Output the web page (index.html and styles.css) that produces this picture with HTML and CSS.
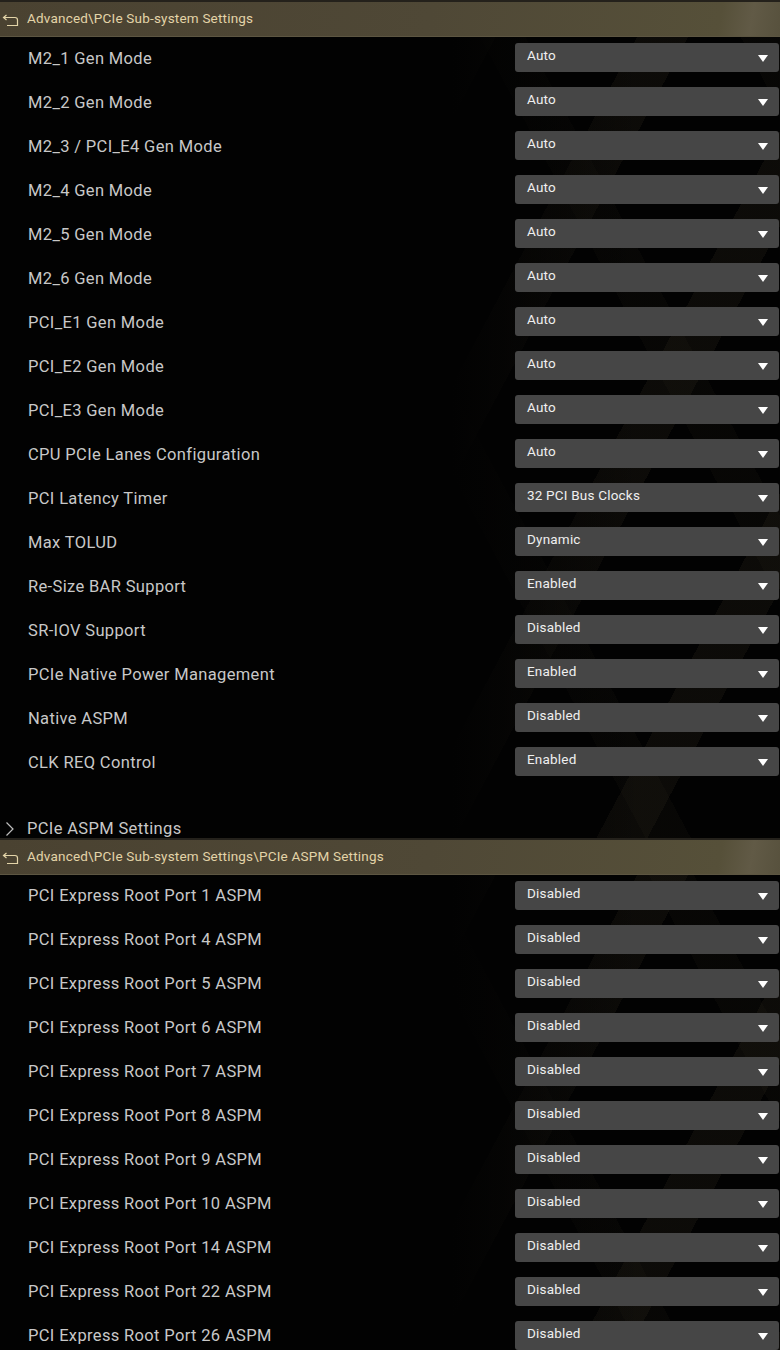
FILE: index.html
```html
<!DOCTYPE html>
<html lang="en">
<head>
<meta charset="utf-8">
<title>PCIe Sub-system Settings</title>
<link rel="stylesheet" href="styles.css">
</head>
<body>
<section class="page page-main">
  <header class="crumb">
    <svg class="back" width="17" height="13" viewBox="0 0 17 13"><path d="M4.5 1 L1.5 3.5 L4.5 6 M1.8 3.5 H13 Q15.5 3.5 15.5 6 V11.5 H5" fill="none" stroke="#e3d4a8" stroke-width="1.2"/></svg>
    <span>Advanced\PCIe Sub-system Settings</span>
  </header>
  <div class="list">
    <div class="row"><span class="label">M2_1 Gen Mode</span><div class="select"><span>Auto</span><i class="caret"></i></div></div>
    <div class="row"><span class="label">M2_2 Gen Mode</span><div class="select"><span>Auto</span><i class="caret"></i></div></div>
    <div class="row"><span class="label">M2_3 / PCI_E4 Gen Mode</span><div class="select"><span>Auto</span><i class="caret"></i></div></div>
    <div class="row"><span class="label">M2_4 Gen Mode</span><div class="select"><span>Auto</span><i class="caret"></i></div></div>
    <div class="row"><span class="label">M2_5 Gen Mode</span><div class="select"><span>Auto</span><i class="caret"></i></div></div>
    <div class="row"><span class="label">M2_6 Gen Mode</span><div class="select"><span>Auto</span><i class="caret"></i></div></div>
    <div class="row"><span class="label">PCI_E1 Gen Mode</span><div class="select"><span>Auto</span><i class="caret"></i></div></div>
    <div class="row"><span class="label">PCI_E2 Gen Mode</span><div class="select"><span>Auto</span><i class="caret"></i></div></div>
    <div class="row"><span class="label">PCI_E3 Gen Mode</span><div class="select"><span>Auto</span><i class="caret"></i></div></div>
    <div class="row"><span class="label">CPU PCIe Lanes Configuration</span><div class="select"><span>Auto</span><i class="caret"></i></div></div>
    <div class="row"><span class="label">PCI Latency Timer</span><div class="select"><span>32 PCI Bus Clocks</span><i class="caret"></i></div></div>
    <div class="row"><span class="label">Max TOLUD</span><div class="select"><span>Dynamic</span><i class="caret"></i></div></div>
    <div class="row"><span class="label">Re-Size BAR Support</span><div class="select"><span>Enabled</span><i class="caret"></i></div></div>
    <div class="row"><span class="label">SR-IOV Support</span><div class="select"><span>Disabled</span><i class="caret"></i></div></div>
    <div class="row"><span class="label">PCIe Native Power Management</span><div class="select"><span>Enabled</span><i class="caret"></i></div></div>
    <div class="row"><span class="label">Native ASPM</span><div class="select"><span>Disabled</span><i class="caret"></i></div></div>
    <div class="row"><span class="label">CLK REQ Control</span><div class="select"><span>Enabled</span><i class="caret"></i></div></div>
  </div>
  <div class="submenu">
    <svg class="chev" width="10" height="16" viewBox="0 0 10 16"><path d="M1.5 1.5 L8 8 L1.5 14.5" fill="none" stroke="#bdbdbd" stroke-width="1.2"/></svg>
    <span>PCIe ASPM Settings</span>
  </div>
</section>
<section class="page page-aspm">
  <header class="crumb">
    <svg class="back" width="17" height="13" viewBox="0 0 17 13"><path d="M4.5 1 L1.5 3.5 L4.5 6 M1.8 3.5 H13 Q15.5 3.5 15.5 6 V11.5 H5" fill="none" stroke="#e3d4a8" stroke-width="1.2"/></svg>
    <span>Advanced\PCIe Sub-system Settings\PCIe ASPM Settings</span>
  </header>
  <div class="list">
    <div class="row"><span class="label">PCI Express Root Port 1 ASPM</span><div class="select"><span>Disabled</span><i class="caret"></i></div></div>
    <div class="row"><span class="label">PCI Express Root Port 4 ASPM</span><div class="select"><span>Disabled</span><i class="caret"></i></div></div>
    <div class="row"><span class="label">PCI Express Root Port 5 ASPM</span><div class="select"><span>Disabled</span><i class="caret"></i></div></div>
    <div class="row"><span class="label">PCI Express Root Port 6 ASPM</span><div class="select"><span>Disabled</span><i class="caret"></i></div></div>
    <div class="row"><span class="label">PCI Express Root Port 7 ASPM</span><div class="select"><span>Disabled</span><i class="caret"></i></div></div>
    <div class="row"><span class="label">PCI Express Root Port 8 ASPM</span><div class="select"><span>Disabled</span><i class="caret"></i></div></div>
    <div class="row"><span class="label">PCI Express Root Port 9 ASPM</span><div class="select"><span>Disabled</span><i class="caret"></i></div></div>
    <div class="row"><span class="label">PCI Express Root Port 10 ASPM</span><div class="select"><span>Disabled</span><i class="caret"></i></div></div>
    <div class="row"><span class="label">PCI Express Root Port 14 ASPM</span><div class="select"><span>Disabled</span><i class="caret"></i></div></div>
    <div class="row"><span class="label">PCI Express Root Port 22 ASPM</span><div class="select"><span>Disabled</span><i class="caret"></i></div></div>
    <div class="row"><span class="label">PCI Express Root Port 26 ASPM</span><div class="select"><span>Disabled</span><i class="caret"></i></div></div>
  </div>
</section>
</body>
</html>
```
FILE: styles.css
```css
html, body {
  margin: 0;
  padding: 0;
  background: #000;
}

body {
  width: 780px;
  overflow: hidden;
  font-family: Roboto, "Noto Sans", sans-serif;
  color: #c8c8c8;
}

/* dark panel with the faint diagonal chevron bands on the right */
.page {
  background-color: #020202;
  background-image:
    linear-gradient(to right, #020202 0%, #020202 58%, rgba(2,2,2,0) 82%),
    repeating-linear-gradient(118deg, rgba(0,0,0,0) 0px, rgba(0,0,0,0) 70px, rgba(40,35,25,0.28) 70px, rgba(40,35,25,0.28) 115px, rgba(0,0,0,0) 115px, rgba(0,0,0,0) 170px),
    repeating-linear-gradient(62deg, rgba(0,0,0,0) 0px, rgba(0,0,0,0) 110px, rgba(36,32,22,0.16) 110px, rgba(36,32,22,0.16) 150px, rgba(0,0,0,0) 150px, rgba(0,0,0,0) 230px);
}

/* breadcrumb bar */
.crumb {
  height: 35px;
  border-top: 2px solid #24211b;
  display: flex;
  align-items: center;
  gap: 8px;
  padding-left: 2px;
  background: linear-gradient(100deg, #4a4231 0%, #4f4836 55%, #565039 92%, #615a46 96%, #57513d 100%);
  box-shadow: inset 0 -1px 0 #5d5642;
  color: #e3d4a8;
  font-size: 13.5px;
  letter-spacing: 0.2px;
}

.crumb span {
  line-height: 1;
  padding-bottom: 1px;
}

.back {
  flex: none;
  margin-top: 2px;
}

.list {
  display: flex;
  flex-direction: column;
}

.row {
  height: 44px;
  display: flex;
  align-items: flex-start;
  justify-content: space-between;
}

.label {
  padding-left: 28px;
  margin-top: 11px;
  font-size: 16.5px;
  line-height: 22px;
  letter-spacing: 0.35px;
  color: #c8c8c8;
}

.page-aspm .label {
  margin-top: 10px;
}

.select {
  margin-top: 6px;
  margin-right: 1px;
  width: 264px;
  height: 29px;
  box-sizing: border-box;
  background: #464646;
  border-radius: 3px;
  display: flex;
  align-items: center;
  justify-content: space-between;
  padding: 0 11px 0 12px;
  color: #efefef;
  font-size: 13.5px;
  letter-spacing: 0.2px;
}

.select span {
  line-height: 1;
  padding-bottom: 3px;
}

.caret {
  width: 0;
  height: 0;
  border-left: 5px solid transparent;
  border-right: 5px solid transparent;
  border-top: 7px solid #ffffff;
  margin-top: 2px;
}

/* link to a nested page */
.submenu {
  height: 53px;
  box-sizing: border-box;
  padding-top: 35px;
  display: flex;
  align-items: flex-start;
  gap: 12px;
  padding-left: 5px;
  font-size: 16.5px;
  line-height: 18px;
  color: #c8c8c8;
  letter-spacing: 0.35px;
}

.chev {
  flex: none;
  margin-top: 1px;
}
```
